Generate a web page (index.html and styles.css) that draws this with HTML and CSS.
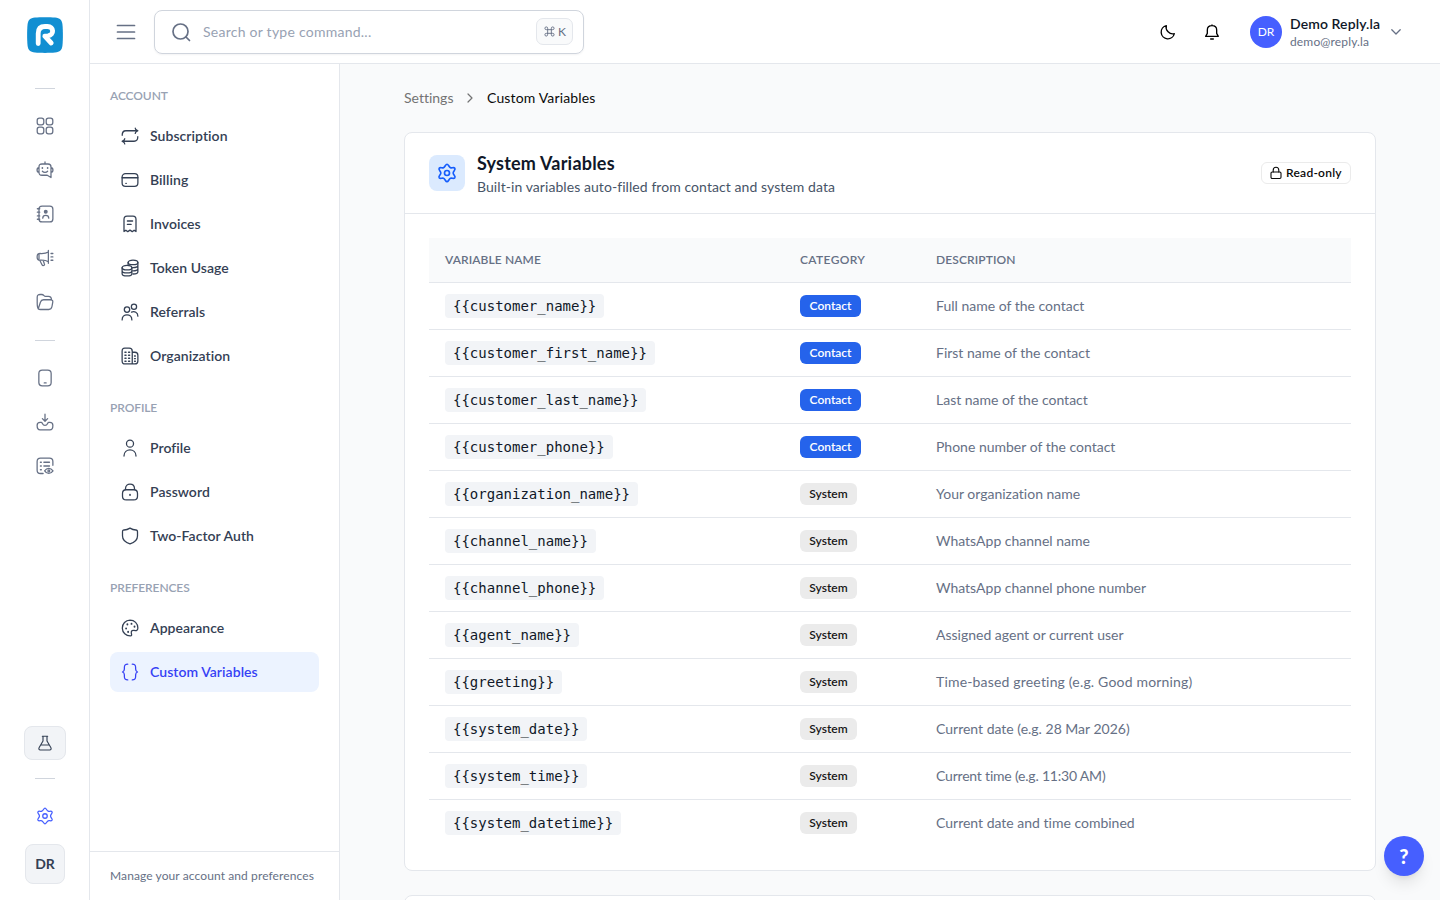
FILE: index.html
```html
<!DOCTYPE html>
<html lang="en">
    <head>
        <title>Custom Variables</title>
        <meta charset="utf-8">
        <link rel="stylesheet" href="styles.css">
    </head>
    <body>
        <div class="app">
            <aside class="rail">
                <svg class="logo" viewBox="0 0 36 36">
                    <path d="M8 .5C13 0 23 0 28 .5C33 1 35 3 35.500 8C36 13 36 23 35.500 28C35 33 33 35 28 35.500C23 36 13 36 8 35.500C3 35 1 33 .5 28C0 23 0 13 .5 8C1 3 3 1 8 .5Z" fill="#128fd2"/>
                    <path d="M11.200 26.500V16.500C11.200 11 14 9.500 18 9.500H20.500C27 9.500 27.500 17.800 21 18.800L17.800 19.200L24.200 26" fill="none" stroke="#fff" stroke-width="4.800" stroke-linecap="round" stroke-linejoin="round"/>
                </svg>
                <div class="rail_line"></div>
                <nav class="rail_nav">
                    <a class="rail_item"><svg class="icon" viewBox="0 0 24 24"><rect x="1.600" y="1.600" width="8.800" height="8.800" rx="3"/><rect x="13.600" y="1.600" width="8.800" height="8.800" rx="3"/><rect x="1.600" y="13.600" width="8.800" height="8.800" rx="3"/><rect x="13.600" y="13.600" width="8.800" height="8.800" rx="3"/></svg></a>
                    <a class="rail_item"><svg class="icon" viewBox="0 0 24 24"><path d="M12 4V1.200M8 4h8c3 0 4 1 4 4v14l-5-3H8c-3 0-4-1-4-4V8c0-3 1-4 4-4ZM4 9c-2 0-2.600 1-2.600 3S2 15 4 15M20 9c2 0 2.600 1 2.600 3S22 15 20 15M8.500 13.700c1.800 2 5.200 2 7 0"/><path d="M8.500 9v.5M15.500 9v.5" stroke-width="2.200"/></svg></a>
                    <a class="rail_item"><svg class="icon" viewBox="0 0 24 24"><rect x="4" y="1.500" width="18.500" height="21" rx="4"/><path d="M1.800 5H5M1.800 9.500H5M1.800 14.500H5M1.800 19H5M9 17.500c0-5 8-5 8 0"/><circle cx="13" cy="9" r="1.800" fill="currentColor"/></svg></a>
                    <a class="rail_item"><svg class="icon" viewBox="0 0 24 24"><path d="M16.500 2v17M16.500 4c-4 2.500-8 2-11 2-3 0-4 1-4 4.500S2.500 15 5.500 15c3 0 7-.5 11 2M4 8v5M5 15l3 6c1 2 4 1 3.200-1L9.500 15M20 6h2.500M20 10.500h2.500M20 15h2.500"/></svg></a>
                    <a class="rail_item"><svg class="icon" viewBox="0 0 24 24"><path d="M3 21C1.500 19 1.600 16 1.600 12V6c0-3 1-4 4-4h2c3 0 3 2.500 5 2.500h4c3.200 0 4 1.500 4 4.500M3 21l3-9c.6-2 1.500-3 4-3h9c3 0 3.800 1 3.300 3.500l-1 5.500c-.6 3-1.700 4-4.300 4H6c-1.600 0-2.400-.3-3-1Z"/></svg></a>
                </nav>
                <div class="rail_line"></div>
                <nav class="rail_nav">
                    <a class="rail_item"><svg class="icon" viewBox="0 0 24 24"><rect x="3.800" y="1.500" width="16.400" height="21" rx="4.500"/><path d="M11 18.500h2.500"/></svg></a>
                    <a class="rail_item"><svg class="icon" viewBox="0 0 24 24"><path d="M12 1.500v9M8.500 7.500 12 11l3.500-3.500M7 12.500c2 0 1 4 5 4s3-4 5-4h1.500c3 0 4 1 4 4s-1 6-4 6h-13c-3 0-4-3-4-6s1-4 4-4Z"/></svg></a>
                    <a class="rail_item"><svg class="icon" viewBox="0 0 24 24"><path d="M22.500 11V6c0-3-1.500-4.500-4.500-4.500H6C3 1.500 1.500 3 1.500 6v11.500c0 3 1.500 4.500 4.500 4.500h3.500M10.500 7H18M10.500 12H18"/><path d="M6 7h1M6 12h1M6 17h1" stroke-width="2"/><path d="M11.500 18.500c3-4.500 8-4.500 11.200 0-3.200 4.500-8.200 4.500-11.200 0Z"/><circle cx="17.100" cy="18.500" r="1.200"/></svg></a>
                </nav>
                <div class="rail_bottom">
                    <button class="lab_btn"><svg class="icon" viewBox="0 0 24 24"><path d="M8 1.800h8M9 2v7L3.500 18.500C2 21 3 22.500 5 22.500h14c2 0 3-1.500 1.500-4L15 9V2M6 15h12"/></svg></button>
                    <div class="rail_line"></div>
                    <a class="rail_item active"><svg class="icon" viewBox="0 0 24 24"><path id="gear" d="M12 1.500c1.700 0 2.200 3.300 4.200 4.100 1.700.7 4-.9 5.200.8 1.200 1.800-2 3.200-2 5.600s3.200 3.800 2 5.600c-1.200 1.700-3.500.1-5.200.8-2 .8-2.500 4.100-4.200 4.100s-2.200-3.300-4.200-4.100c-1.700-.7-4 .9-5.200-.8-1.200-1.800 2-3.200 2-5.600s-3.200-3.800-2-5.600c1.200-1.700 3.500-.1 5.200-.8 2-.8 2.500-4.100 4.200-4.100Z"/><circle cx="12" cy="12" r="3"/></svg></a>
                    <button class="user_btn">DR</button>
                </div>
            </aside>

            <div class="page">
                <header class="topbar">
                    <svg class="icon burger" viewBox="0 0 20 16"><path d="M1.500 1.500h17M1.500 8h17M1.500 14.500h17"/></svg>
                    <div class="search">
                        <svg class="icon" viewBox="0 0 20 20"><circle cx="9.500" cy="9.500" r="7.500"/><path d="m15 15 3.500 3.500"/></svg>
                        <span class="placeholder">Search or type command...</span>
                        <kbd class="shortcut"><svg class="icon" viewBox="0 0 12 12"><path d="M4 4V2.500A1.500 1.500 0 1 0 2.500 4h7A1.500 1.500 0 1 0 8 2.500v7A1.500 1.500 0 1 0 9.500 8h-7A1.500 1.500 0 1 0 4 9.500Z"/></svg>K</kbd>
                    </div>
                    <div class="actions">
                        <svg class="icon" viewBox="0 0 24 24"><path d="M21.500 14.500A10 10 0 1 1 9.500 2.500c-2 6.500 5 14 12 12Z"/></svg>
                        <svg class="icon" viewBox="0 0 24 24"><path d="M12 2.500c-4.500 0-7 3-7 6.500v5L2.500 18.500h19L19 14V9c0-3.500-2.500-6.500-7-6.500ZM10 22.500h4M12 2.500V1.500"/></svg>
                    </div>
                    <div class="account">
                        <span class="avatar">DR</span>
                        <div class="who">
                            <span class="who_name">Demo Reply.la</span>
                            <span class="who_mail">demo@reply.la</span>
                        </div>
                        <svg class="icon chevron" viewBox="0 0 12 12"><path d="m1.800 3.800 4.200 4.200 4.200-4.200"/></svg>
                    </div>
                </header>

                <div class="content">
                    <aside class="panel">
                        <div class="panel_scroll">
                            <section class="group">
                                <h3 class="group_title">Account</h3>
                                <a class="item"><svg class="icon" viewBox="0 0 24 24"><path d="M1.600 11c0-4 1-6 5-6H22M19 1.500c0 2 2 2.500 3.500 3.500-1.500 1-3.500 1.500-3.500 3.500M22.400 13c0 4-1 6-5 6H2M5 22.500c0-2-2-2.500-3.500-3.500 1.500-1 3.500-1.500 3.500-3.500"/></svg>Subscription</a>
                                <a class="item"><svg class="icon" viewBox="0 0 24 24"><rect x="1.500" y="3.500" width="21" height="17" rx="4.500"/><path d="M1.500 9h21M6.500 16.500h.5"/></svg>Billing</a>
                                <a class="item"><svg class="icon" viewBox="0 0 24 24"><path d="M4 22V6c0-3 1-4.500 4-4.500h8c3 0 4 1.500 4 4.500v16l-2.500-1.800-2.500 2-3-2-3 2-2.500-2ZM8.500 8h7M8.500 12.500h5"/></svg>Invoices</a>
                                <a class="item"><svg class="icon" viewBox="0 0 24 24"><ellipse cx="16" cy="4.500" rx="6.500" ry="3"/><path d="M9.500 4.500v4M22.500 4.500V17c0 1.800-3 3-6.500 3M22.500 8.800c0 1.800-3 3-7 2.800M22.500 13c0 1.800-3 3-7 2.800"/><ellipse cx="8" cy="11.500" rx="6.500" ry="3"/><path d="M1.500 11.500v8c0 4 13 4 13 0v-8M1.500 15.500c0 4 13 4 13 0"/></svg>Token Usage</a>
                                <a class="item"><svg class="icon" viewBox="0 0 24 24"><circle cx="8" cy="8.800" r="3.600"/><circle cx="17.300" cy="5" r="3.500"/><path d="M1.500 22.500c0-9 13-9 13 0M14 12.200c4-1.800 8.500.5 8.500 5.300"/></svg>Referrals</a>
                                <a class="item"><svg class="icon" viewBox="0 0 24 24"><path d="M5 1.500h6c3 0 4 1.500 4 4v17H5.500c-3 0-4-1.500-4-4V5.500c0-2.500 1-4 3.500-4ZM15 7h3.500c3 0 4 1.500 4 4v7.500c0 2.500-1 4-4 4H15"/><path d="M5.200 7h1.600M10 7h1.600M5.200 11h1.600M10 11h1.600M5.200 15h1.600M10 15h1.600M5.200 19h1.600M10 19h1.600M18 12h1.200M18 15.500h1.200M18 19h1.200"/></svg>Organization</a>
                            </section>
                            <section class="group">
                                <h3 class="group_title">Profile</h3>
                                <a class="item"><svg class="icon" viewBox="0 0 24 24"><circle cx="12" cy="6.200" r="4.700"/><path d="M4 22.800c0-11 16-11 16 0"/></svg>Profile</a>
                                <a class="item"><svg class="icon" viewBox="0 0 24 24"><path d="M7 9h10c3 0 5 2 5 5v3.500c0 3-2 5-5 5H7c-3 0-5-2-5-5V14c0-3 2-5 5-5ZM6 9V7.500c0-8 12-8 12 0V9"/><path d="M12 15.300v1" stroke-width="2.200"/></svg>Password</a>
                                <a class="item"><svg class="icon" viewBox="0 0 24 24"><path d="M12 1.500C9 3.500 6 4 4 4c-1.300 0-2 .8-2 2.500V12c0 6 5 9 10 10.500C17 21 22 18 22 12V6.500C22 4.800 21.300 4 20 4c-2 0-5-.5-8-2.500Z"/></svg>Two-Factor Auth</a>
                            </section>
                            <section class="group">
                                <h3 class="group_title">Preferences</h3>
                                <a class="item"><svg class="icon" viewBox="0 0 24 24"><path d="M12 1.500a10.500 10.500 0 1 0 .5 21c2.500 0 1.500-2 1.200-4-.4-3 2-3.800 4-3.300 2.600.7 4.800.3 4.800-3.200C22.500 6 18 1.500 12 1.500Z"/><path d="M8.500 7v.3M14 6.200v.3M18 10v.3M6.800 12.500v.3M9.500 17v.3" stroke-width="2.500"/></svg>Appearance</a>
                                <a class="item active"><svg class="icon" viewBox="0 0 24 24"><path d="M9 1.500C5 1.500 4.500 3 4.500 6v2c0 2.500-1 3.500-2.500 4 1.500.5 2.500 1.500 2.500 4v2c0 3 .5 4.500 4.500 4.500M15 1.500c4 0 4.500 1.500 4.500 4.500v2c0 2.500 1 3.500 2.500 4-1.500.5-2.500 1.500-2.500 4v2c0 3-.5 4.500-4.500 4.500"/></svg>Custom Variables</a>
                            </section>
                        </div>
                        <footer class="panel_footer">Manage your account and preferences</footer>
                    </aside>

                    <main class="main">
                        <nav class="breadcrumb">
                            <span class="crumb">Settings</span>
                            <svg class="icon" viewBox="0 0 14 14"><path d="m5 3 4 4-4 4"/></svg>
                            <span class="crumb_current">Custom Variables</span>
                        </nav>
                        <section class="card">
                            <div class="card_header">
                                <span class="card_icon"><svg class="icon" viewBox="0 0 24 24"><use href="#gear"/><circle cx="12" cy="12" r="3"/></svg></span>
                                <div class="card_heading">
                                    <h2 class="card_title">System Variables</h2>
                                    <p class="card_text">Built-in variables auto-filled from contact and system data</p>
                                </div>
                                <span class="readonly"><svg class="icon" viewBox="0 0 12 14"><rect x="1" y="6" width="10" height="6.500" rx="1.200"/><path d="M3.200 6V4.300c0-4 5.600-4 5.600 0V6"/></svg>Read-only</span>
                            </div>
                            <table class="vars">
                                <thead>
                                    <tr><th class="col_name">Variable name</th><th class="col_cat">Category</th><th>Description</th></tr>
                                </thead>
                                <tbody>
                                    <tr><td><code>{{customer_name}}</code></td><td><span class="badge contact">Contact</span></td><td>Full name of the contact</td></tr>
                                    <tr><td><code>{{customer_first_name}}</code></td><td><span class="badge contact">Contact</span></td><td>First name of the contact</td></tr>
                                    <tr><td><code>{{customer_last_name}}</code></td><td><span class="badge contact">Contact</span></td><td>Last name of the contact</td></tr>
                                    <tr><td><code>{{customer_phone}}</code></td><td><span class="badge contact">Contact</span></td><td>Phone number of the contact</td></tr>
                                    <tr><td><code>{{organization_name}}</code></td><td><span class="badge">System</span></td><td>Your organization name</td></tr>
                                    <tr><td><code>{{channel_name}}</code></td><td><span class="badge">System</span></td><td>WhatsApp channel name</td></tr>
                                    <tr><td><code>{{channel_phone}}</code></td><td><span class="badge">System</span></td><td>WhatsApp channel phone number</td></tr>
                                    <tr><td><code>{{agent_name}}</code></td><td><span class="badge">System</span></td><td>Assigned agent or current user</td></tr>
                                    <tr><td><code>{{greeting}}</code></td><td><span class="badge">System</span></td><td class="wide">Time-based greeting (e.g. Good morning)</td></tr>
                                    <tr><td><code>{{system_date}}</code></td><td><span class="badge">System</span></td><td>Current date (e.g. 28 Mar 2026)</td></tr>
                                    <tr><td><code>{{system_time}}</code></td><td><span class="badge">System</span></td><td class="narrow">Current time (e.g. 11:30 AM)</td></tr>
                                    <tr><td><code>{{system_datetime}}</code></td><td><span class="badge">System</span></td><td>Current date and time combined</td></tr>
                                </tbody>
                            </table>
                        </section>
                        <section class="card next_card"></section>
                    </main>
                </div>
            </div>
        </div>
        <button class="help">?</button>
    </body>
</html>
```
FILE: styles.css
```css
*{
    box-sizing: border-box;
}
body{
    margin: 0;
    font-family: Lato, "Liberation Sans", sans-serif;
    font-size: 14px;
    line-height: 20px;
    font-variant-ligatures: none;
    color: #344054;
    background-color: #f9fafb;
    overflow: hidden;
}
h2, h3, p{
    margin: 0;
}
button{
    font: inherit;
    padding: 0;
}
.icon{
    display: block;
    flex: none;
    width: 18px;
    height: 18px;
    fill: none;
    stroke: currentColor;
    stroke-width: 1.7;
    stroke-linecap: round;
    stroke-linejoin: round;
}
.app{
    display: flex;
    height: 900px;
}

/* left rail */
.rail{
    display: flex;
    flex-direction: column;
    align-items: center;
    flex: none;
    width: 90px;
    padding: 17px 0 16px;
    border-right: 1px solid #e4e7ec;
    background-color: white;
    color: #667085;
}
.logo{
    width: 36px;
    height: 36px;
    margin: 0 0 35px 1px;
}
.rail_line{
    flex: none;
    width: 20px;
    height: 1px;
    margin-left: 1px;
    background-color: #d0d5dd;
}
.rail_nav{
    display: flex;
    flex-direction: column;
    gap: 4px;
    padding: 17px 0 18px;
}
.rail_item{
    display: flex;
    align-items: center;
    justify-content: center;
    width: 40px;
    height: 40px;
}
.rail_item.active{
    color: #465fff;
}
.rail_bottom{
    display: flex;
    flex-direction: column;
    align-items: center;
    margin-top: auto;
}
.lab_btn{
    display: flex;
    align-items: center;
    justify-content: center;
    width: 42px;
    height: 34px;
    margin: 0 0 18px 1px;
    border: 1px solid #e4e7ec;
    border-radius: 8px;
    background-color: #f2f4f7;
    color: #344054;
}
.lab_btn .icon{
    width: 16px;
    height: 16px;
}
.rail_bottom .rail_item{
    margin: 17px 0 8px;
}
.user_btn{
    width: 40px;
    height: 40px;
    margin-left: 1px;
    border: 1px solid #e4e7ec;
    border-radius: 8px;
    background-color: #f2f4f7;
    color: #344054;
    font-weight: 700;
}

/* top bar */
.page{
    flex: 1;
    display: flex;
    flex-direction: column;
    min-width: 0;
}
.topbar{
    display: flex;
    align-items: center;
    flex: none;
    height: 64px;
    padding: 0 38px 0 26px;
    border-bottom: 1px solid #e4e7ec;
    background-color: white;
}
.burger{
    width: 20px;
    height: 16px;
    color: #667085;
}
.search{
    display: flex;
    align-items: center;
    width: 430px;
    height: 44px;
    margin-left: 18px;
    padding: 0 10px 0 16px;
    border: 1px solid #d0d5dd;
    border-radius: 8px;
    box-shadow: 0 1px 2px rgba(16, 24, 40, 0.05);
    color: #667085;
}
.search > .icon{
    width: 20px;
    height: 20px;
}
.placeholder{
    flex: 1;
    margin-left: 12px;
    color: #98a2b3;
    letter-spacing: 0.25px;
}
.shortcut{
    display: flex;
    align-items: center;
    gap: 3px;
    width: 37px;
    height: 27px;
    padding: 0 7px;
    border: 1px solid #e4e7ec;
    border-radius: 7px;
    background-color: #f9fafb;
    font-family: inherit;
    font-size: 12px;
}
.shortcut .icon{
    width: 11px;
    height: 11px;
    stroke-width: 1;
}
.actions{
    display: flex;
    gap: 28px;
    margin-left: auto;
    color: black;
}
.actions .icon{
    width: 16px;
    height: 16px;
    stroke-width: 2;
}
.account{
    display: flex;
    align-items: center;
    margin-left: 30px;
}
.avatar{
    width: 32px;
    height: 32px;
    border-radius: 50%;
    background-color: #465fff;
    color: white;
    font-size: 12px;
    line-height: 32px;
    text-align: center;
}
.who{
    display: flex;
    flex-direction: column;
    width: 90px;
    margin: 0 10px 0 8px;
    white-space: nowrap;
}
.who_name{
    line-height: 19px;
    font-weight: 600;
    letter-spacing: 0.1px;
    color: #101828;
}
.who_mail{
    font-size: 12px;
    line-height: 17px;
    letter-spacing: 0.15px;
    color: #667085;
}
.chevron{
    width: 12px;
    height: 12px;
    color: #667085;
    stroke-width: 1.3;
}

/* settings menu */
.content{
    flex: 1;
    display: flex;
    min-height: 0;
}
.panel{
    display: flex;
    flex-direction: column;
    flex: none;
    width: 250px;
    border-right: 1px solid #e4e7ec;
    background-color: white;
}
.panel_scroll{
    flex: 1;
    display: flex;
    flex-direction: column;
    gap: 24px;
    padding: 24px 20px;
}
.group{
    display: flex;
    flex-direction: column;
    gap: 4px;
}
.group_title{
    margin-bottom: 8px;
    font-size: 12px;
    line-height: 16px;
    font-weight: 600;
    letter-spacing: -0.1px;
    color: #98a2b3;
    text-transform: uppercase;
}
.item{
    display: flex;
    align-items: center;
    gap: 11px;
    height: 40px;
    padding: 0 11px;
    border-radius: 8px;
    font-weight: 600;
    letter-spacing: 0.05px;
}
.item.active{
    background-color: #ecf3ff;
    color: #3641f5;
}
.panel_footer{
    height: 49px;
    padding: 16px 20px;
    border-top: 1px solid #e4e7ec;
    font-size: 12px;
    line-height: 16px;
    letter-spacing: 0.1px;
    color: #667085;
    white-space: nowrap;
}

/* page content */
.main{
    flex: 1;
    padding: 24px 64px 0;
    overflow: hidden;
}
.breadcrumb{
    display: flex;
    align-items: center;
    height: 20px;
    margin-bottom: 24px;
}
.breadcrumb .icon{
    width: 14px;
    height: 14px;
    margin: 0 10px;
    color: #737373;
    stroke-width: 1.2;
}
.crumb{
    width: 49px;
    color: #737373;
}
.crumb_current{
    color: #0a0a0a;
    letter-spacing: 0.15px;
}
.card{
    border: 1px solid #e4e7ec;
    border-radius: 8px;
    background-color: white;
}
.card_header{
    display: flex;
    align-items: center;
    height: 81px;
    padding: 0 24px;
    border-bottom: 1px solid #e4e7ec;
}
.card_icon{
    display: flex;
    align-items: center;
    justify-content: center;
    width: 36px;
    height: 36px;
    border-radius: 8px;
    background-color: #dbeafe;
    color: #155dfc;
}
.card_icon .icon{
    width: 20px;
    height: 20px;
    stroke-width: 2;
}
.card_heading{
    flex: 1;
    margin-left: 12px;
}
.card_title{
    margin-top: -1px;
    font-size: 18px;
    line-height: 28px;
    font-weight: 700;
    letter-spacing: 0.2px;
    color: #101828;
}
.card_text{
    color: #475467;
    letter-spacing: 0.07px;
}
.readonly{
    display: flex;
    align-items: center;
    gap: 4px;
    height: 22px;
    width: 90px;
    padding: 0 8px;
    border: 1px solid #ebebeb;
    border-radius: 6px;
    color: #0a0a0a;
    font-size: 12px;
    font-weight: 600;
    letter-spacing: 0.25px;
    white-space: nowrap;
}
.readonly .icon{
    width: 12px;
    height: 14px;
    stroke-width: 1.1;
}
.vars{
    width: 922px;
    margin: 24px;
    border-collapse: separate;
    border-spacing: 0;
    table-layout: fixed;
}
.vars th{
    height: 45px;
    padding: 0 16px;
    border-bottom: 1px solid #e4e7ec;
    background-color: #f9fafb;
    color: #667085;
    font-size: 12px;
    font-weight: 600;
    letter-spacing: 0.1px;
    text-align: left;
    text-transform: uppercase;
}
.col_name{
    width: 355px;
}
.col_cat{
    width: 136px;
}
.vars .col_cat{
    letter-spacing: 0.35px;
}
.vars td{
    height: 47px;
    padding: 0 16px;
    border-bottom: 1px solid #e4e7ec;
    color: #667085;
}
.vars td.wide{
    letter-spacing: 0.18px;
}
.vars td.narrow{
    letter-spacing: -0.2px;
}
.vars tr:last-child td{
    height: 46px;
    border-bottom: 0;
}
.vars code{
    display: block;
    width: fit-content;
    padding: 2px 8px;
    border-radius: 4px;
    background-color: #f2f4f7;
    color: #101828;
    font-family: "DejaVu Sans Mono", monospace;
    font-size: 14px;
}
.badge{
    display: block;
    width: 57px;
    height: 22px;
    border-radius: 6px;
    background-color: #ebebeb;
    color: #171717;
    font-size: 12px;
    line-height: 22px;
    font-weight: 600;
    text-align: center;
}
.badge.contact{
    width: 61px;
    background-color: #2563eb;
    color: white;
}
.next_card{
    height: 200px;
    margin-top: 24px;
}

/* floating help button */
.help{
    position: absolute;
    right: 16px;
    bottom: 24px;
    width: 40px;
    height: 40px;
    border: 0;
    border-radius: 50%;
    background-color: #465fff;
    color: white;
    font-size: 20px;
    font-weight: 900;
    box-shadow: 0 10px 15px -3px rgba(0, 0, 0, 0.1), 0 4px 6px -4px rgba(0, 0, 0, 0.1);
}
```
